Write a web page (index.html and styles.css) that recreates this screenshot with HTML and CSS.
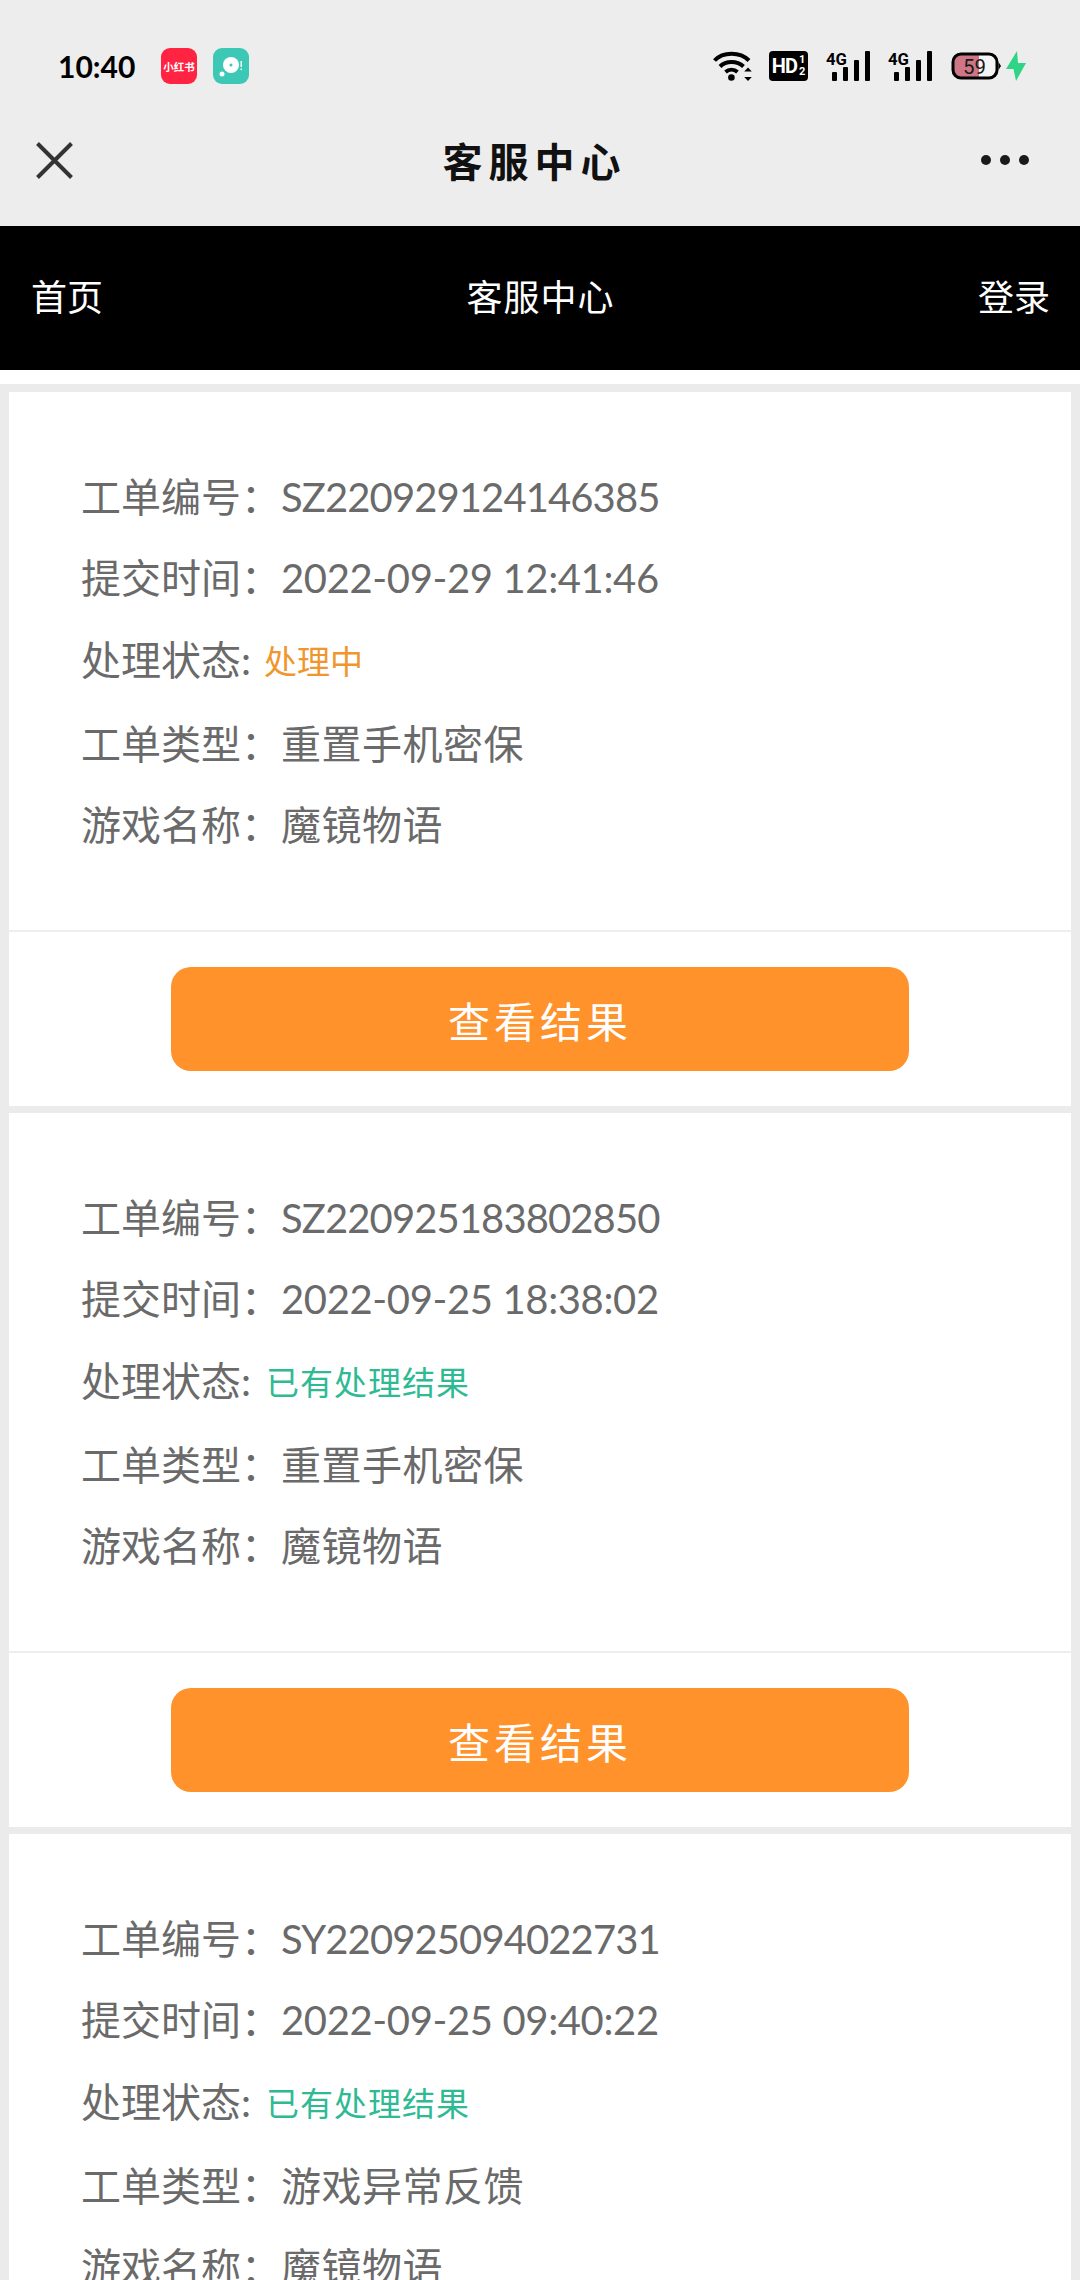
FILE: index.html
```html
<!DOCTYPE html>
<html lang="zh-CN">
<head>
<meta charset="utf-8">
<title>客服中心</title>
<link rel="stylesheet" href="styles.css">
</head>
<body>
<div class="app">
  <div class="statusbar">
    <div class="status-left">
      <span class="time">10:40</span>
      <span class="app-icon red"><span class="red-text">小红书</span></span>
      <span class="app-icon teal">
        <svg viewBox="0 0 36 36" width="36" height="36"><circle cx="18" cy="17" r="8" fill="#fff"/><circle cx="18" cy="17" r="1.5" fill="#3cc8b4"/><circle cx="9" cy="26" r="2.5" fill="#fff"/><rect x="27.5" y="13" width="1.4" height="6" fill="#fff"/><rect x="27.5" y="20.5" width="1.4" height="1.6" fill="#fff"/></svg>
      </span>
    </div>
    <div class="status-right">
      <svg class="ic-wifi" viewBox="0 0 41 30" width="41" height="30"><g fill="none" stroke="#000" stroke-width="4"><path d="M1.5 9.5C10 .5 27 .5 36 9.5"/><path d="M7 15.5C13 9.5 24 9.5 30.5 15.5"/><path d="M12.5 21C16 18 21 18 24.5 21"/></g><circle cx="18.4" cy="26.5" r="3.3" fill="#000"/><path d="M35 16.5l3.8 4h-7.6zM35 30l-3.8-4h7.6z" fill="#000"/></svg>
      <span class="hd"><span class="hd-main">HD</span><span class="hd-frac"><span>1</span><span>2</span></span></span>
      <svg class="ic-sig" viewBox="0 0 44 30" width="44" height="30"><text x="0" y="14" class="sig-text" textLength="21" lengthAdjust="spacingAndGlyphs">4G</text><rect x="6" y="21" width="5" height="9" rx="1"/><rect x="17" y="16" width="5" height="14" rx="1"/><rect x="28" y="9" width="5" height="21" rx="1"/><rect x="39" y="0" width="5" height="30" rx="1"/></svg>
      <svg class="ic-sig" viewBox="0 0 44 30" width="44" height="30"><text x="0" y="14" class="sig-text" textLength="21" lengthAdjust="spacingAndGlyphs">4G</text><rect x="6" y="21" width="5" height="9" rx="1"/><rect x="17" y="16" width="5" height="14" rx="1"/><rect x="28" y="9" width="5" height="21" rx="1"/><rect x="39" y="0" width="5" height="30" rx="1"/></svg>
      <svg class="ic-bat" viewBox="0 0 50 28" width="50" height="28"><rect x="2" y="2" width="44" height="24" rx="8" fill="#f4f4f4"/><path d="M10 2h18v24H10a8 8 0 0 1-8-8v-8a8 8 0 0 1 8-8z" fill="#cf7686"/><rect x="2" y="2" width="44" height="24" rx="8" fill="none" stroke="#000" stroke-width="3"/><path d="M47.5 10l2.5 4-2.5 4z" fill="#000"/><text x="12" y="21.5" class="bat-text" textLength="23" lengthAdjust="spacingAndGlyphs">59</text></svg>
      <svg class="ic-bolt" viewBox="0 0 20 30" width="20" height="30"><path d="M11 0L0 18h7.5L10 30 20 12h-8z" fill="#2fd487"/></svg>
    </div>
  </div>

  <header class="titlebar">
    <svg class="ic-close" viewBox="0 0 37 37" width="37" height="37"><path d="M1.5 1.5l34 34M35.5 1.5l-34 34" stroke="#333" stroke-width="4" fill="none"/></svg>
    <h1 class="title">客服中心</h1>
    <div class="dots"><i></i><i></i><i></i></div>
  </header>

  <nav class="nav">
    <span>首页</span>
    <span class="nav-center">客服中心</span>
    <span>登录</span>
  </nav>

  <div class="spacer"></div>

  <main class="list">
    <section class="card">
      <div class="info">
        <p class="row">工单编号：<span class="val">SZ220929124146385</span></p>
        <p class="row">提交时间：<span class="date">2022-09-29 12:41:46</span></p>
        <p class="row row-status">处理状态:<span class="state doing">处理中</span></p>
        <p class="row">工单类型：<span class="cn">重置手机密保</span></p>
        <p class="row">游戏名称：<span class="cn">魔镜物语</span></p>
      </div>
      <div class="actions"><button class="btn">查看结果</button></div>
    </section>
    <section class="card">
      <div class="info">
        <p class="row">工单编号：<span class="val">SZ220925183802850</span></p>
        <p class="row">提交时间：<span class="date">2022-09-25 18:38:02</span></p>
        <p class="row row-status">处理状态:<span class="state done">已有处理结果</span></p>
        <p class="row">工单类型：<span class="cn">重置手机密保</span></p>
        <p class="row">游戏名称：<span class="cn">魔镜物语</span></p>
      </div>
      <div class="actions"><button class="btn">查看结果</button></div>
    </section>
    <section class="card">
      <div class="info">
        <p class="row">工单编号：<span class="val">SY220925094022731</span></p>
        <p class="row">提交时间：<span class="date">2022-09-25 09:40:22</span></p>
        <p class="row row-status">处理状态:<span class="state done">已有处理结果</span></p>
        <p class="row">工单类型：<span class="cn">游戏异常反馈</span></p>
        <p class="row">游戏名称：<span class="cn">魔镜物语</span></p>
      </div>
      <div class="actions"><button class="btn">查看结果</button></div>
    </section>
  </main>
</div>
</body>
</html>
```
FILE: styles.css
```css
* { box-sizing: border-box; }
html, body { margin: 0; padding: 0; }
body {
  width: 1080px;
  height: 2280px;
  overflow: hidden;
  background: #ebebeb;
  font-family: "Lato", "Noto Sans CJK SC", sans-serif;
}
.app { display: flex; flex-direction: column; height: 2280px; overflow: hidden; }

.statusbar {
  height: 132px;
  flex: none;
  background: #ededed;
  display: flex;
  justify-content: space-between;
  align-items: center;
  padding: 0 54px 0 58px;
}
.status-left { display: flex; align-items: center; }
.time { font-size: 30px; font-weight: 700; color: #000; width: 103px; font-family: "Lato", sans-serif; }
.app-icon {
  width: 36px; height: 36px; border-radius: 9px;
  display: flex; align-items: center; justify-content: center;
  overflow: hidden;
}
.red { background: #ff2442; margin-right: 16px; }
.teal { background: #3cc8b4; }
.red-text { font-size: 10.5px; font-weight: 700; color: #fff; white-space: nowrap; font-family: "Noto Sans CJK SC", sans-serif; }

.status-right { display: flex; align-items: center; }
.ic-wifi { margin-right: 15px; }
.hd {
  width: 39px; height: 30px; background: #000; border-radius: 4px; color: #fff;
  display: flex; align-items: center; justify-content: center; margin-right: 18px;
  font-family: "Roboto", sans-serif; font-weight: 700;
}
.hd-main { font-size: 20px; letter-spacing: -1px; margin-right: 2px; }
.hd-frac { display: flex; flex-direction: column; font-size: 11px; line-height: 12px; }
.ic-sig { margin-right: 18px; }
.ic-sig + .ic-bat { margin-left: 1px; }
.ic-bolt { margin-left: 5px; }
.sig-text { font: 700 16px "Roboto", sans-serif; fill: #000; }
.bat-text { font: 400 20px "Roboto", sans-serif; fill: #1a1a1a; }

.titlebar {
  height: 94px;
  flex: none;
  background: #ededed;
  display: grid;
  grid-template-columns: 1fr auto 1fr;
  align-items: center;
  padding: 0 47px 38px 36px;
}
.title {
  margin: 0;
  font-size: 40px;
  font-weight: 700;
  letter-spacing: 6px;
  color: #111;
  line-height: 1;
  font-family: "Noto Sans CJK SC", sans-serif;
}
.dots { justify-self: end; display: flex; gap: 9px; margin-right: 4px; }
.dots i { display: block; width: 10px; height: 10px; border-radius: 50%; background: #1a1a1a; }

.nav {
  height: 144px;
  flex: none;
  background: #000;
  color: #fff;
  display: flex;
  justify-content: space-between;
  align-items: center;
  padding: 0 30px 6px 31px;
  font-size: 36px;
  font-family: "Noto Sans CJK SC", sans-serif;
  font-weight: 400;
}
.nav-center { letter-spacing: 1px; }

.spacer { height: 14px; flex: none; background: #fff; }

.list {
  padding: 8px 9px 0;
  display: flex;
  flex-direction: column;
  gap: 7px;
}
.card { background: #fff; flex: none; height: 714px; }
.info { height: 540px; border-bottom: 2px solid #eee; padding: 65px 0 0 72px; }
.row {
  margin: 0;
  height: 81px;
  line-height: 81px;
  font-size: 40px;
  color: #6a6a6a;
  font-weight: 400;
  white-space: nowrap;
  letter-spacing: 0;
}
.val { letter-spacing: -0.9px; }
.date { letter-spacing: -0.37px; }
.cn { letter-spacing: 0.5px; }
.row-status { display: flex; align-items: center; height: 85px; padding-bottom: 3px; }
.state { font-size: 33px; font-weight: 400; font-family: "Noto Sans CJK SC", sans-serif; }
.doing { color: #ef962f; margin-left: 13px; }
.done { color: #2fba94; margin-left: 15px; letter-spacing: 1px; }

.actions { height: 174px; display: flex; align-items: center; justify-content: center; }
.btn {
  width: 738px;
  height: 104px;
  border: 0;
  border-radius: 20px;
  background: #ff922b;
  color: #fff;
  font-size: 42px;
  letter-spacing: 4px;
  font-family: "Noto Sans CJK SC", sans-serif;
  font-weight: 400;
}
```
